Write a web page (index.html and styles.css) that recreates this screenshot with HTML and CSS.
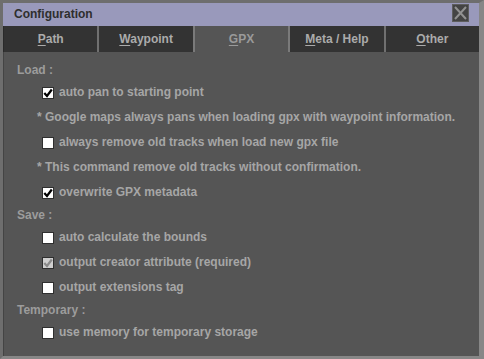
FILE: index.html
```html
<!DOCTYPE html>
<html>
<head>
<meta charset="utf-8">
<link rel="stylesheet" href="styles.css">
</head>
<body>
<div class="window">
  <div class="titlebar">
    <span class="title">Configuration</span>
    <span class="close"><svg width="15" height="16" viewBox="0 0 15 16"><path d="M2 2 L13 14 M13 2 L2 14" stroke="#929292" stroke-width="2" fill="none"/></svg></span>
  </div>
  <div class="tabs">
    <div class="tab"><u>P</u>ath</div>
    <div class="tab"><u>W</u>aypoint</div>
    <div class="tab active"><u>G</u>PX</div>
    <div class="tab"><u>M</u>eta / Help</div>
    <div class="tab"><u>O</u>ther</div>
  </div>
  <div class="content">
    <div class="head">Load :</div>
    <div class="row"><span class="cb"><svg width="10" height="10" viewBox="0 0 10 10"><path d="M1.3 5 L4 8 L8.8 1.5" stroke="#000" stroke-width="2.2" fill="none"/></svg></span>auto pan to starting point</div>
    <div class="note">* Google maps always pans when loading gpx with waypoint information.</div>
    <div class="row"><span class="cb"></span>always remove old tracks when load new gpx file</div>
    <div class="note">* This command remove old tracks without confirmation.</div>
    <div class="row"><span class="cb"><svg width="10" height="10" viewBox="0 0 10 10"><path d="M1.3 5 L4 8 L8.8 1.5" stroke="#000" stroke-width="2.2" fill="none"/></svg></span>overwrite GPX metadata</div>
    <div class="head">Save :</div>
    <div class="row"><span class="cb"></span>auto calculate the bounds</div>
    <div class="row"><span class="cb disabled"><svg width="10" height="10" viewBox="0 0 10 10"><path d="M1.3 5 L4 8 L8.8 1.5" stroke="#8a8a8a" stroke-width="2.2" fill="none"/></svg></span>output creator attribute (required)</div>
    <div class="row"><span class="cb"></span>output extensions tag</div>
    <div class="head">Temporary :</div>
    <div class="row"><span class="cb"></span>use memory for temporary storage</div>
  </div>
</div>
</body>
</html>
```
FILE: styles.css
```css
html, body {
  margin: 0;
  padding: 0;
  background: #6e6e6e;
}
.window {
  width: 484px;
  height: 359px;
  box-sizing: border-box;
  border-top: 3px solid #6e6e6e;
  border-left: 3px solid #6e6e6e;
  border-right: 5px solid #878787;
  border-bottom: 3px solid #878787;
  display: flex;
  flex-direction: column;
  font-family: "Liberation Sans", Arial, sans-serif;
  font-weight: bold;
  font-size: 12px;
}
.titlebar {
  height: 23px;
  background: #9999bb;
  display: flex;
  align-items: flex-start;
  justify-content: space-between;
  flex: none;
}
.title {
  color: #2e2e2e;
  padding-left: 11px;
  line-height: 23px;
  font-size: 12px;
}
.close {
  margin-top: 1px;
  margin-right: 10px;
  width: 15px;
  height: 16px;
  background: #444444;
  border: 1px solid #5e5e5e;
  display: flex;
}
.tabs {
  height: 26px;
  flex: none;
  display: flex;
  background: #333333;
  border-left: 1px solid #2a2a2a;
}
.tab {
  flex: 1;
  text-align: center;
  line-height: 26px;
  color: #ababab;
  border-left: 2px solid #707070;
}
.tab:first-child {
  border-left: none;
}
.tab.active {
  background: #555555;
  color: #9a9a9a;
  border-left-color: #7a7a7a;
  border-right: 2px solid #7a7a7a;
}
.tab.active + .tab {
  border-left: none;
}
.tab u {
  text-decoration: underline;
  text-underline-offset: 2px;
}
.content {
  flex: 1;
  background: #555555;
  border-left: 1px solid #444444;
  padding-top: 8px;
  color: #a6a6a6;
}
.head {
  height: 20px;
  line-height: 20px;
  padding-left: 13px;
  color: #9c9c9c;
}
.row, .note {
  height: 25px;
  line-height: 25px;
  display: flex;
  align-items: center;
  white-space: nowrap;
}
.row {
  padding-left: 38px;
}
.note {
  padding-left: 33px;
}
.cb {
  width: 10px;
  height: 10px;
  border: 1px solid #2f2f2f;
  background: #ffffff;
  margin-right: 5px;
  margin-top: 1px;
  display: flex;
  flex: none;
}
.cb.disabled {
  background: #cfcfcf;
}
```
